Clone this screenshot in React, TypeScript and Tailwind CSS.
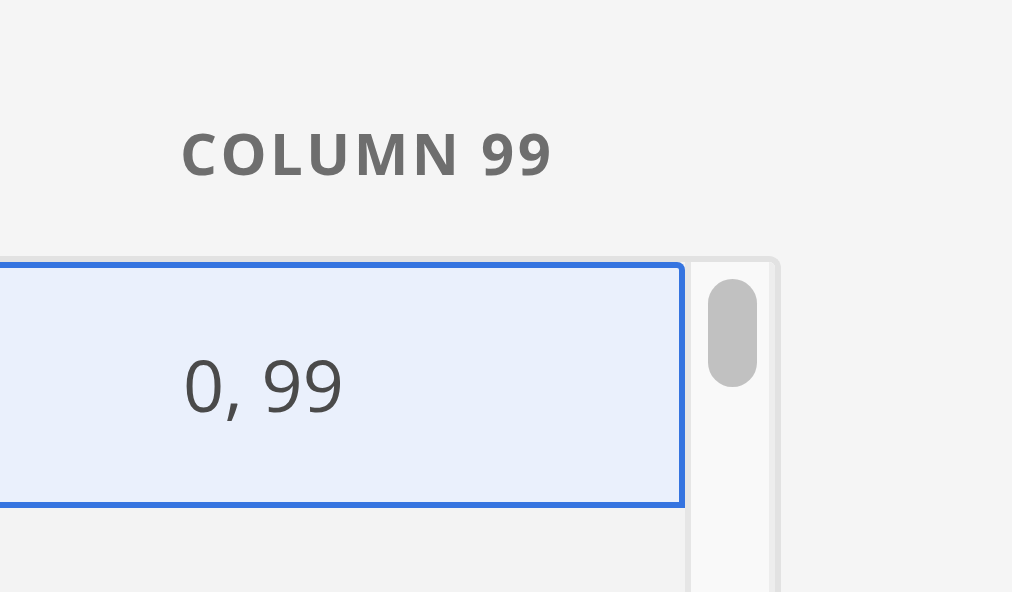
import React from "react";

export default function App() {
  return (
    <div className="w-[1012px] h-[592px] overflow-hidden bg-[#f5f5f5] flex flex-col" style={{ fontFamily: '"Open Sans", "Noto Sans", sans-serif' }}>
      <div className="h-[256px] shrink-0 flex items-start pl-[180px] pt-[124px]">
        <span className="text-[58px] font-bold tracking-[0.06em] text-[#6e6e6e] leading-none">COLUMN 99</span>
      </div>
      <div className="flex-1 flex w-[781px] border-t-[6px] border-r-[6px] border-[#e2e2e2] rounded-tr-[12px] bg-[#f3f3f3] overflow-hidden">
        <div className="flex-1 flex flex-col">
          <div className="h-[246px] shrink-0 border-[6px] border-l-0 border-[#3574e0] rounded-tr-[8px] bg-[#eaf0fc] flex items-center pl-[183px] pb-[3px]">
            <span className="text-[72px] text-[#4a4a4a] leading-none">0, 99</span>
          </div>
          <div className="flex-1 bg-[#f3f3f3]" />
        </div>
        <div className="w-[90px] shrink-0 border-l-[6px] border-r-[6px] border-l-[#e6e6e6] border-r-[#ededed] bg-[#f9f9f9] pt-[17px] pl-[17px]">
          <div className="w-[49px] h-[108px] rounded-full bg-[#c1c1c1]" />
        </div>
      </div>
    </div>
  );
}
